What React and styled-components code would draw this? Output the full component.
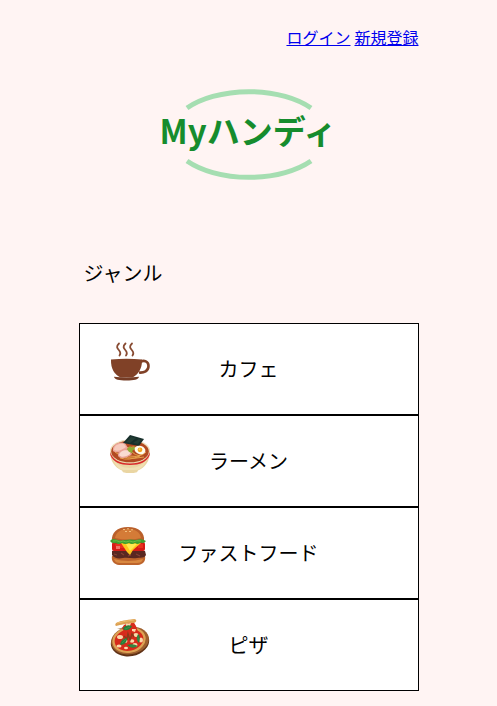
import React from "react";
import styled, { createGlobalStyle } from "styled-components";

const GlobalStyle = createGlobalStyle`
  * { box-sizing: border-box; }
  body {
    margin: 0;
    background: #fff4f3;
    color: #000;
    font-family: "Noto Sans CJK JP", "Noto Sans", sans-serif;
  }
`;

const Page = styled.div`
  width: 100%;
  max-width: 340px;
  margin: 0 auto;
  padding: 25px 0 16px;
`;

const AccountNav = styled.nav`
  display: flex;
  justify-content: flex-end;
  gap: 4px;
  font-size: 16px;
  line-height: 24px;
`;

const AccountLink = styled.a`
  color: #0000ee;
  text-decoration: underline;
`;

const Brand = styled.h1`
  display: flex;
  justify-content: center;
  margin: 41px 0 0;
`;

const Logo = styled.svg`
  display: block;
  width: 200px;
  height: 90px;
  overflow: visible;
`;

const LogoText = styled.text`
  fill: #168c2d;
  font-family: "Noto Sans CJK JP", sans-serif;
  font-size: 33px;
  font-weight: 700;
`;

const SectionTitle = styled.h2`
  margin: 78px 0 35px;
  padding-left: 5px;
  font-size: 20px;
  font-weight: 400;
  line-height: 30px;
`;

const GenreList = styled.ul`
  margin: 0;
  padding: 0;
  list-style: none;
`;

const GenreLink = styled.a`
  display: grid;
  grid-template-columns: 40px 1fr 40px;
  align-items: center;
  height: 92px;
  padding: 0 30px;
  border: 1px solid #000;
  background: #fff;
  color: #000;
  text-decoration: none;
`;

const GenreIcon = styled.svg`
  align-self: start;
  width: 40px;
  height: 40px;
  margin-top: 18px;
`;

const GenreName = styled.span`
  font-size: 20px;
  line-height: 30px;
  text-align: center;
  white-space: nowrap;
`;

const CoffeeIcon = () => (
  <GenreIcon viewBox="0 0 40 40" aria-hidden="true">
    <g fill="none" stroke="#884b32" strokeWidth="1.8" strokeLinecap="round">
      <path d="M9 1.500C6 4.500 7 6 8.800 8S11 11.500 9.500 13.500" />
      <path d="M15.500 1.500C12.500 4.500 13.500 6 15.300 8S17.500 11.500 16 13.500" />
      <path d="M22 1.500C19 4.500 20 6 21.800 8S24 11.500 22.500 13.500" />
    </g>
    <path d="M30.500 19.800C34 17.800 38.500 19.200 38.500 24C38.500 29 34 31 29 30.500" fill="none" stroke="#804127" strokeWidth="2.600" />
    <path d="M1 17.500Q16.500 15.800 32 17.500C32.300 27 28 32.500 22.500 35.500H10.500C4.500 32.500.7 27 1 17.500Z" fill="#804127" />
    <path d="M4 34.800Q16.500 36 29 34.800C28.500 37.500 24 38.600 16.500 38.600S4.500 37.500 4 34.800Z" fill="#753c25" />
  </GenreIcon>
);

const RamenIcon = () => (
  <GenreIcon viewBox="0 0 40 40" aria-hidden="true">
    <path d="M0 17C0 27 5 34 12 36.500L13 38.200Q20 40 27 38.200L28 36.500C35 34 40 27 40 17Z" fill="#ead6a3" />
    <path d="M3 25C7 31 13 34 20 34C27 34 33 31 37 25C34 33 29 36 26 36H14C10 36 6 33 3 25Z" fill="#f1e0b4" />
    <ellipse cx="20" cy="17" rx="20" ry="11.500" fill="#eee0bd" />
    <path d="M.3 18C2 25 9 29.500 20 29.500S38 25 39.700 18V21C37 28 30 31 20 31S3 28 .3 21Z" fill="#d92c2d" />
    <ellipse cx="20" cy="17.500" rx="18.800" ry="10.800" fill="#b24a21" />
    <g fill="none" stroke="#e7a44d" strokeWidth="1">
      <path d="M5 18Q15 27 34 23M10 24Q19 27 30 22M22 18Q29 25 36 18M19 22Q27 24 33 20" />
      <path d="M17 14Q23 12 29 14M18 16Q24 13 30 15" />
    </g>
    <path d="M3 17C2 11 7 7 15 9L18 14C15 18 7 20 3 17Z" fill="#eda79a" />
    <path d="M4 16C4 11 9 9 14 10L16 13C12 16 7 18 4 16Z" fill="#f6cbbd" />
    <path d="M8 22C7 17 14 13 20 16L22 20C18 24 11 26 8 22Z" fill="#e9a295" />
    <path d="M9 21C10 17 15 15 20 17L20 20C16 23 11 24 9 21Z" fill="#f9dbd1" />
    <path d="M13 9L20 1L34 5L29 12Z" fill="#172f2b" />
    <path d="M16 8L21 3L26 4L20 9M23 9L29 5L31 6L28 10Z" fill="#233e35" />
    <path d="M17 15L20 12L22 14L24 12L25 15L22 17L23 19L19 18Z" fill="#8eae35" />
    <ellipse cx="30" cy="16" rx="5.500" ry="4.200" transform="rotate(15 30 16)" fill="#fffbed" />
    <circle cx="30" cy="15.800" r="2.400" fill="#f4a51d" />
    <circle cx="29.500" cy="15.300" r="1" fill="#ffd35d" />
  </GenreIcon>
);

const BurgerIcon = () => (
  <GenreIcon viewBox="0 0 40 40" aria-hidden="true">
    <path d="M2 30C1 35 4 38.500 9 39H28C33 38.500 36 35 35 30Z" fill="#bd642c" />
    <path d="M4 33Q18 37 33 33C32 36 30 37 27 37H10C7 37 5 36 4 33Z" fill="#d98840" />
    <path d="M2 25Q18 22 35 25L36 29C34 33 31 31 27 32C22 33 18 31 13 32C8 33 4 32 2 29Z" fill="#592721" />
    <path d="M4 28L7 29M11 27L14 29M18 30L21 29M26 28L30 30" fill="none" stroke="#854034" strokeWidth="1.200" />
    <rect x="2" y="16" width="33" height="9" rx="2" fill="#d51b16" />
    <path d="M5 18H14V22H6ZM28 18H33V22H28Z" fill="#e9301e" />
    <path d="M6 20H10V23H6Z" fill="#f07468" />
    <path d="M11 17H31L23 24L20 29L17 26L15 23Z" fill="#ffc51c" />
    <path d="M16 18H27L20 25Z" fill="#ffe84f" />
    <path d="M2 15C1 7 7 1 18 1S35 7 34 15Z" fill="#ba602b" />
    <path d="M5 12C6 6 11 3 18 3S30 6 31 12Q18 15 5 12Z" fill="#d47b37" />
    <path d="M0 15Q2 12 6 13.500Q10 15 15 14Q20 13 26 14Q32 12 36 15Q34 18 31 16.500Q28 19 25 17Q22 19 19 17Q15 19 12 17Q8 19 6 17Q2 18 0 15Z" fill="#3f9f31" />
    <path d="M3 15Q7 14 10 16Q13 14 16 16Q20 14 23 16Q27 14 31 15" fill="none" stroke="#6bbd43" strokeWidth="1" />
    <g fill="#ffe0a0">
      <ellipse cx="14" cy="3.500" rx=".9" ry=".5" />
      <ellipse cx="18" cy="2.800" rx=".9" ry=".5" />
      <ellipse cx="22" cy="3.800" rx=".9" ry=".5" />
      <ellipse cx="16" cy="5.500" rx=".9" ry=".5" />
      <ellipse cx="20" cy="5.500" rx=".9" ry=".5" />
    </g>
  </GenreIcon>
);

const PizzaIcon = () => (
  <GenreIcon viewBox="0 0 40 40" aria-hidden="true">
    <ellipse cx="20" cy="24.200" rx="19.300" ry="14" transform="rotate(-10 20 24.200)" fill="#603217" />
    <ellipse cx="20" cy="22.500" rx="19" ry="13.800" transform="rotate(-10 20 22.500)" fill="#9e602f" />
    <ellipse cx="19" cy="22" rx="16.800" ry="12.800" transform="rotate(-12 19 22)" fill="#dda354" />
    <ellipse cx="19" cy="22" rx="14.500" ry="10.800" transform="rotate(-12 19 22)" fill="#d72a1b" />
    <path d="M7 11L15 9L15 16L19 20L24 17L26 10Z" fill="#90602b" />
    <g fill="#fbd9aa">
      <ellipse cx="10" cy="19" rx="3" ry="2" />
      <ellipse cx="15" cy="23" rx="2.500" ry="2" />
      <ellipse cx="22" cy="23" rx="2.300" ry="1.800" />
      <ellipse cx="26" cy="17" rx="2.500" ry="2" />
      <ellipse cx="31" cy="22" rx="2" ry="2.500" />
      <ellipse cx="25" cy="27" rx="2.500" ry="2" />
      <ellipse cx="9" cy="28" rx="2.500" ry="1.500" />
      <ellipse cx="16" cy="30" rx="2" ry="1.300" />
    </g>
    <path d="M14 7L23 3L26 8L28 14L24 15L22 20L19 17L16 18L12 10Z" fill="#d82c1c" />
    <path d="M6 8C4 5 7 3 24 1C27 1 27 4 24 5C17 5 11 7 6 8Z" fill="#dda153" />
    <path d="M7 5Q16 3 24 2" fill="none" stroke="#edbd6e" strokeWidth="1" />
    <path d="M16 6L21 5L20 8L16 9ZM22 11L26 11L25 14L22 13Z" fill="#fbd9aa" />
    <path d="M14 18L17 21L18 16L20 22L22 16L24 19" fill="none" stroke="#8e3819" strokeWidth="1.500" />
    <g fill="#27813b">
      <path d="M13 10Q16 6 22 8Q20 13 14 12Z" />
      <path d="M10 26Q12 20 17 20Q17 26 11 27Z" />
      <path d="M28 16Q31 18 29 25Q25 22 28 16Z" />
      <path d="M17 27Q23 25 28 28Q22 32 17 27Z" />
    </g>
    <path d="M15 11L20 9M12 25L16 21M28 18L28 23M20 28L26 28" fill="none" stroke="#529852" strokeWidth=".6" />
  </GenreIcon>
);

const genres = [
  { name: "カフェ", href: "#cafe", Icon: CoffeeIcon },
  { name: "ラーメン", href: "#ramen", Icon: RamenIcon },
  { name: "ファストフード", href: "#fastfood", Icon: BurgerIcon },
  { name: "ピザ", href: "#pizza", Icon: PizzaIcon },
];

export default function App() {
  return (
    <>
      <GlobalStyle />
      <Page>
        <header>
          <AccountNav>
            <AccountLink href="#login">ログイン</AccountLink>
            <AccountLink href="#signup">新規登録</AccountLink>
          </AccountNav>
          <Brand>
            <Logo viewBox="0 0 200 90" role="img" aria-label="Myハンディ">
              <g fill="none" stroke="#a5deb1" strokeWidth="5">
                <path d="M38 18A79 43 0 0 1 162 18" />
                <path d="M38 71A79 43 0 0 0 162 71" />
              </g>
              <LogoText x="99" y="54" textAnchor="middle">Myハンディ</LogoText>
            </Logo>
          </Brand>
        </header>
        <main>
          <SectionTitle>ジャンル</SectionTitle>
          <GenreList>
            {genres.map(({ name, href, Icon }) => (
              <li key={name}>
                <GenreLink href={href}>
                  <Icon />
                  <GenreName>{name}</GenreName>
                </GenreLink>
              </li>
            ))}
          </GenreList>
        </main>
      </Page>
    </>
  );
}
